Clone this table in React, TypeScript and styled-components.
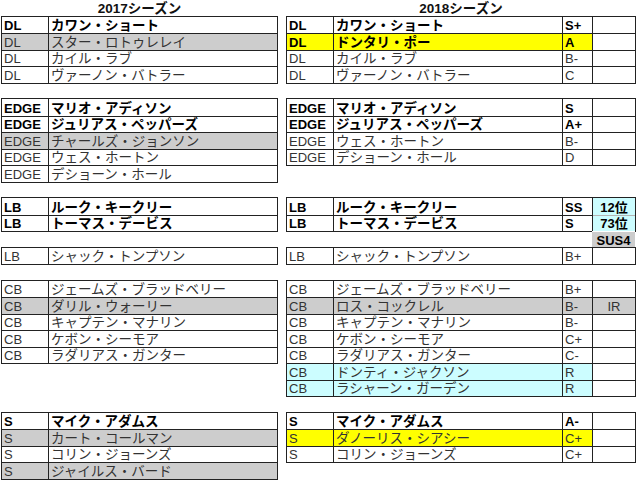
import React from "react";
import styled, { createGlobalStyle } from "styled-components";

const ROW = 16.5;
const LINE = "#222";

const FILLS = {
  gray: "#cdcdcd",
  yellow: "#ffff00",
  cyan: "#ccfdff",
};

type Fill = keyof typeof FILLS;

type Player = {
  pos: string;
  name: string;
  grade?: string;
  note?: string;
  bold?: boolean;
  fill?: Fill;
  noteFill?: Fill;
};

type Block =
  | { kind: "table"; rows: Player[] }
  | { kind: "gap"; rows: number }
  | { kind: "note"; text: string };

const GlobalStyle = createGlobalStyle`
  html, body {
    margin: 0;
    padding: 0;
    background: #fff;
  }
  body {
    font-family: "Liberation Sans", "Noto Sans CJK JP", sans-serif;
    color: #333;
  }
`;

const Sheet = styled.div`
  width: 640px;
  height: 489px;
  box-sizing: border-box;
  padding-left: 1px;
  display: flex;
  align-items: flex-start;
  gap: 8px;
  overflow: hidden;
`;

const Season = styled.section<{ $width: number }>`
  width: ${(p) => p.$width}px;
  flex: none;
  display: flex;
  flex-direction: column;
`;

const Title = styled.div`
  height: ${ROW}px;
  display: flex;
  align-items: flex-end;
  justify-content: center;
  font-size: 13.5px;
  font-weight: 700;
  line-height: 16px;
  color: #111;
`;

const Table = styled.div`
  border: 1px solid ${LINE};
  margin: -1px 0;
`;

const Gap = styled.div<{ $rows: number }>`
  height: ${(p) => p.$rows * ROW}px;
`;

const Row = styled.div`
  display: flex;
  height: ${ROW}px;
`;

const Cell = styled.div<{
  $w?: number;
  $fill?: Fill;
  $top: boolean;
  $soft?: boolean;
  $bold?: boolean;
  $center?: boolean;
}>`
  box-sizing: border-box;
  ${(p) => (p.$w ? `width: ${p.$w}px; flex: none;` : "flex: 1; min-width: 0;")}
  background: ${(p) => (p.$fill ? FILLS[p.$fill] : "transparent")};
  border-top: ${(p) =>
    p.$top ? `1px solid ${p.$soft ? "#b4b4b4" : LINE}` : "none"};
  display: flex;
  align-items: flex-end;
  justify-content: ${(p) => (p.$center ? "center" : "flex-start")};
  padding: 0 2px;
  font-size: 13px;
  line-height: 15px;
  font-weight: ${(p) => (p.$bold ? 700 : 400)};
  color: ${(p) => (p.$bold ? "#000" : "#333")};
  white-space: nowrap;

  &:not(:last-child) {
    border-right: 1px solid ${LINE};
  }
`;

const NameCell = styled(Cell)`
  font-family: "Noto Sans CJK JP", sans-serif;
  font-size: 13.5px;
  line-height: 16px;
  padding-bottom: 1px;
`;

const NoteRow = styled.div`
  display: flex;
  justify-content: flex-end;
  height: ${ROW}px;
`;

const NoteCell = styled.div`
  box-sizing: border-box;
  width: 43px;
  margin-right: 1px;
  background: ${FILLS.gray};
  border-top: 1px solid #fff;
  display: flex;
  align-items: flex-end;
  justify-content: center;
  font-size: 13px;
  line-height: 15px;
  font-weight: 700;
  color: #000;
`;

const season2017: Block[] = [
  {
    kind: "table",
    rows: [
      { pos: "DL", name: "カワン・ショート", bold: true },
      { pos: "DL", name: "スター・ロトゥレレイ", fill: "gray" },
      { pos: "DL", name: "カイル・ラブ" },
      { pos: "DL", name: "ヴァーノン・バトラー" },
    ],
  },
  { kind: "gap", rows: 1 },
  {
    kind: "table",
    rows: [
      { pos: "EDGE", name: "マリオ・アディソン", bold: true },
      { pos: "EDGE", name: "ジュリアス・ペッパーズ", bold: true },
      { pos: "EDGE", name: "チャールズ・ジョンソン", fill: "gray" },
      { pos: "EDGE", name: "ウェス・ホートン" },
      { pos: "EDGE", name: "デショーン・ホール" },
    ],
  },
  { kind: "gap", rows: 1 },
  {
    kind: "table",
    rows: [
      { pos: "LB", name: "ルーク・キークリー", bold: true },
      { pos: "LB", name: "トーマス・デービス", bold: true },
    ],
  },
  { kind: "gap", rows: 1 },
  { kind: "table", rows: [{ pos: "LB", name: "シャック・トンプソン" }] },
  { kind: "gap", rows: 1 },
  {
    kind: "table",
    rows: [
      { pos: "CB", name: "ジェームズ・ブラッドベリー" },
      { pos: "CB", name: "ダリル・ウォーリー", fill: "gray" },
      { pos: "CB", name: "キャプテン・マナリン" },
      { pos: "CB", name: "ケボン・シーモア" },
      { pos: "CB", name: "ラダリアス・ガンター" },
    ],
  },
  { kind: "gap", rows: 3 },
  {
    kind: "table",
    rows: [
      { pos: "S", name: "マイク・アダムス", bold: true },
      { pos: "S", name: "カート・コールマン", fill: "gray" },
      { pos: "S", name: "コリン・ジョーンズ" },
      { pos: "S", name: "ジャイルス・バード", fill: "gray" },
    ],
  },
];

const season2018: Block[] = [
  {
    kind: "table",
    rows: [
      { pos: "DL", name: "カワン・ショート", grade: "S+", bold: true },
      { pos: "DL", name: "ドンタリ・ポー", grade: "A", bold: true, fill: "yellow" },
      { pos: "DL", name: "カイル・ラブ", grade: "B-" },
      { pos: "DL", name: "ヴァーノン・バトラー", grade: "C" },
    ],
  },
  { kind: "gap", rows: 1 },
  {
    kind: "table",
    rows: [
      { pos: "EDGE", name: "マリオ・アディソン", grade: "S", bold: true },
      { pos: "EDGE", name: "ジュリアス・ペッパーズ", grade: "A+", bold: true },
      { pos: "EDGE", name: "ウェス・ホートン", grade: "B-" },
      { pos: "EDGE", name: "デショーン・ホール", grade: "D" },
    ],
  },
  { kind: "gap", rows: 2 },
  {
    kind: "table",
    rows: [
      { pos: "LB", name: "ルーク・キークリー", grade: "SS", note: "12位", noteFill: "cyan", bold: true },
      { pos: "LB", name: "トーマス・デービス", grade: "S", note: "73位", noteFill: "cyan", bold: true },
    ],
  },
  { kind: "note", text: "SUS4" },
  { kind: "table", rows: [{ pos: "LB", name: "シャック・トンプソン", grade: "B+" }] },
  { kind: "gap", rows: 1 },
  {
    kind: "table",
    rows: [
      { pos: "CB", name: "ジェームズ・ブラッドベリー", grade: "B+" },
      { pos: "CB", name: "ロス・コックレル", grade: "B-", note: "IR", fill: "gray", noteFill: "gray" },
      { pos: "CB", name: "キャプテン・マナリン", grade: "B-" },
      { pos: "CB", name: "ケボン・シーモア", grade: "C+" },
      { pos: "CB", name: "ラダリアス・ガンター", grade: "C-" },
      { pos: "CB", name: "ドンティ・ジャクソン", grade: "R", fill: "cyan" },
      { pos: "CB", name: "ラシャーン・ガーデン", grade: "R", fill: "cyan" },
    ],
  },
  { kind: "gap", rows: 1 },
  {
    kind: "table",
    rows: [
      { pos: "S", name: "マイク・アダムス", grade: "A-", bold: true },
      { pos: "S", name: "ダノーリス・シアシー", grade: "C+", fill: "yellow" },
      { pos: "S", name: "コリン・ジョーンズ", grade: "C+" },
    ],
  },
];

function PlayerRow({ p, top, graded }: { p: Player; top: boolean; graded: boolean }) {
  return (
    <Row>
      <Cell $w={47} $top={top} $fill={p.fill} $bold={p.bold}>
        {p.pos}
      </Cell>
      <NameCell $w={graded ? 229 : undefined} $top={top} $fill={p.fill} $bold={p.bold}>
        {p.name}
      </NameCell>
      {graded && (
        <>
          <Cell $w={30} $top={top} $fill={p.fill} $bold={p.bold}>
            {p.grade}
          </Cell>
          <Cell
            $top={top}
            $soft={top && p.noteFill === "cyan"}
            $fill={p.noteFill}
            $bold={p.noteFill === "cyan"}
            $center
          >
            {p.note}
          </Cell>
        </>
      )}
    </Row>
  );
}

function SeasonColumn({
  title,
  blocks,
  width,
  graded,
}: {
  title: string;
  blocks: Block[];
  width: number;
  graded: boolean;
}) {
  return (
    <Season $width={width}>
      <Title>{title}</Title>
      {blocks.map((b, i) => {
        if (b.kind === "gap") return <Gap key={i} $rows={b.rows} />;
        if (b.kind === "note")
          return (
            <NoteRow key={i}>
              <NoteCell>{b.text}</NoteCell>
            </NoteRow>
          );
        return (
          <Table key={i}>
            {b.rows.map((p, j) => (
              <PlayerRow key={j} p={p} top={j > 0} graded={graded} />
            ))}
          </Table>
        );
      })}
    </Season>
  );
}

export default function App() {
  return (
    <>
      <GlobalStyle />
      <Sheet>
        <SeasonColumn title="2017シーズン" blocks={season2017} width={277} graded={false} />
        <SeasonColumn title="2018シーズン" blocks={season2018} width={350} graded />
      </Sheet>
    </>
  );
}
